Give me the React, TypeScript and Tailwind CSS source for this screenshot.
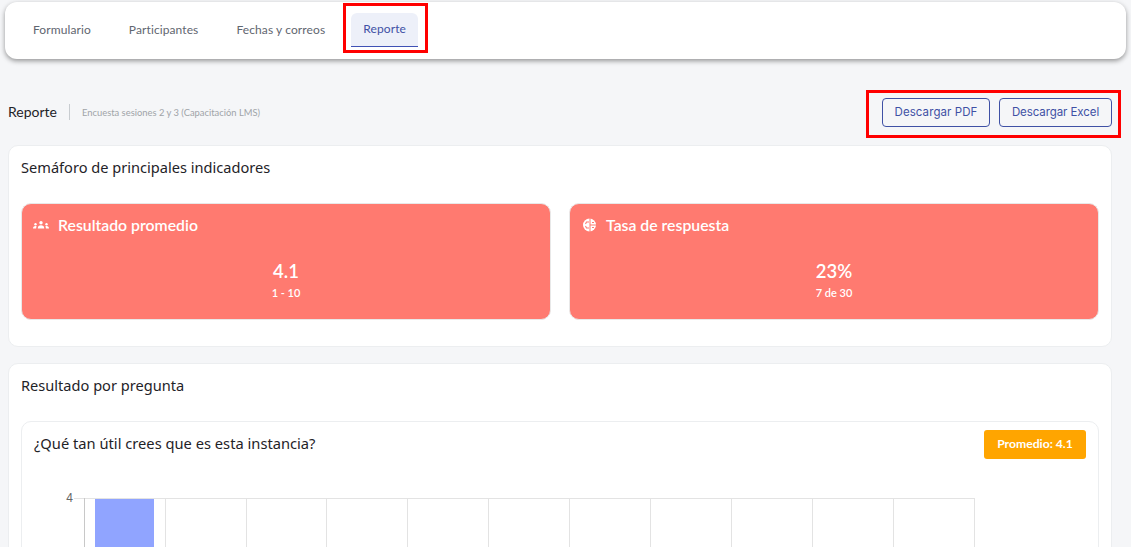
const tabs = ["Formulario", "Participantes", "Fechas y correos"];
const gridLines = [165, 246, 326, 407, 488, 569, 650, 731, 812, 893, 974];

function PeopleIcon() {
  return (
    <svg width="16" height="8" viewBox="0 0 16 8" fill="#fff" className="shrink-0">
      <circle cx="8" cy="1.700" r="1.700" />
      <path d="M4.800 7.500c0-2.200 1.200-3.300 3.200-3.300s3.200 1.100 3.200 3.300z" />
      <circle cx="2.500" cy="3.200" r="1.200" />
      <path d="M0 7.500c0-1.500.9-2.400 2.400-2.400.5 0 .9.100 1.200.3-.3.600-.5 1.300-.5 2.100z" />
      <circle cx="13.500" cy="3.200" r="1.200" />
      <path d="M16 7.500c0-1.500-.9-2.400-2.400-2.400-.5 0-.9.100-1.200.3.300.600.500 1.300.500 2.100z" />
    </svg>
  );
}

function PieIcon() {
  return (
    <svg width="13" height="14" viewBox="0 0 13 14" className="mr-[1px] ml-[2px] shrink-0">
      <circle cx="6.500" cy="7" r="6.500" fill="#fff" />
      <path d="M7 0v14M7 7H13" stroke="#ff7a70" strokeWidth="1" />
      <path d="M6 4H3.500L2.500 6M6 10H3.500L2.500 8M9 4.500H11M9 9.500H11" stroke="#ff7a70" strokeWidth="1.100" fill="none" />
    </svg>
  );
}

function StatCard({ icon, title, value, note }: { icon: React.ReactNode; title: string; value: string; note: string }) {
  return (
    <div className="h-[117px] flex-1 rounded-[10px] border border-[#e8e8e8] bg-[#ff7a70] text-white">
      <div className="flex h-[42px] items-center gap-[9px] pl-[11px]">
        {icon}
        <span className="text-[15.800px] font-semibold">{title}</span>
      </div>
      <div className="mt-[11px] text-center text-[18.500px] font-semibold leading-[28px]">{value}</div>
      <div className="mt-[1px] text-center text-[11px] font-semibold leading-[14px]">{note}</div>
    </div>
  );
}

export default function App() {
  return (
    <div className="h-[547px] overflow-hidden bg-[#f5f6f8] font-['Lato','Open_Sans',sans-serif] text-[#1f2328]">
      <div className="px-[5px] pt-[2px]">
        <div className="flex h-[57px] items-start rounded-[12px] bg-white pl-[9px] shadow-[0_2px_5px_rgba(0,0,0,0.4)]">
          {tabs.map((tab) => (
            <div key={tab} className="mt-[11px] flex h-[33px] items-center px-[19px] text-[12px] tracking-[0.1px] text-[#5f6670]">
              {tab}
            </div>
          ))}
          <div className="mt-[1px] -ml-[1px] border-[3px] border-[#ff0000] pt-[7px] pr-[7px] pb-[3px] pl-[5px]">
            <div className="flex h-[34px] w-[67px] items-center justify-center rounded-t-[6px] border-b border-[#3f51b5] bg-[#edf0f9] pb-[1px] text-[12px] tracking-[0.1px] text-[#3f51a5]">
              Reporte
            </div>
          </div>
        </div>
      </div>

      <div className="mt-[31px] flex h-[48px] items-start justify-between pr-[10px] pl-[8px]">
        <div className="flex h-[44px] items-center">
          <span className="mb-[2px] text-[14px] text-[#1f2328]">Reporte</span>
          <span className="mx-[12px] h-[16px] w-px bg-[#c8ccd0]" />
          <span className="mt-[2px] text-[9.400px] text-[#a0a4a8]">Encuesta sesiones 2 y 3 (Capacitación LMS)</span>
        </div>
        <div className="flex h-[48px] w-[255px] items-start gap-[9px] border-[3px] border-[#ff0000] pt-[5px] pl-[13px]">
          <button className="h-[29px] w-[108px] rounded-[4px] border border-[#3f51a5] font-['Inter',sans-serif] text-[11.500px] tracking-[0.08px] text-[#3f51a5]">
            Descargar PDF
          </button>
          <button className="h-[29px] w-[113px] rounded-[4px] border border-[#3f51a5] font-['Inter',sans-serif] text-[11.500px] tracking-[-0.08px] text-[#3f51a5]">
            Descargar Excel
          </button>
        </div>
      </div>

      <div className="mx-[8px] mt-[7px] h-[202px] w-[1104px] rounded-[10px] border border-[#eceef0] bg-white px-[12px]">
        <h2 className="pt-[12px] font-['Noto_Sans',sans-serif] text-[14.600px] leading-[19px] text-[#1f2328]">
          Semáforo de principales indicadores
        </h2>
        <div className="mt-[26px] flex gap-[18px]">
          <StatCard icon={<PeopleIcon />} title="Resultado promedio" value="4.1" note="1 - 10" />
          <StatCard icon={<PieIcon />} title="Tasa de respuesta" value="23%" note="7 de 30" />
        </div>
      </div>

      <div className="mx-[8px] mt-[16px] h-[300px] w-[1104px] rounded-[10px] border border-[#eceef0] bg-white px-[12px]">
        <h2 className="pt-[12px] font-['Noto_Sans',sans-serif] text-[14.600px] leading-[19px] text-[#1f2328]">
          Resultado por pregunta
        </h2>
        <div className="mt-[26px] h-[200px] rounded-[10px] border border-[#eceef0] bg-white">
          <div className="flex items-start justify-between pt-[8px] pr-[12px] pl-[12px]">
            <span className="pt-[3px] font-['Noto_Sans',sans-serif] text-[14.700px] leading-[20px] text-[#1f2328]">
              ¿Qué tan útil crees que es esta instancia?
            </span>
            <span className="flex h-[29px] w-[102px] items-center justify-center rounded-[3px] bg-[#ffa500] text-[12.200px] font-bold text-white">
              Promedio: 4.1
            </span>
          </div>
          <svg width="1000" height="80" className="mt-[10px] -ml-[22px]" viewBox="0 0 1000 80">
            <text x="73" y="33" fontSize="12" fill="#666" textAnchor="end" fontFamily="Liberation Sans">4</text>
            <line x1="74" y1="29.500" x2="975" y2="29.500" stroke="#e3e3e3" />
            <line x1="84.500" y1="29" x2="84.500" y2="80" stroke="#c8c8c8" />
            {gridLines.map((x) => (
              <line key={x} x1={x + 0.5} y1="29" x2={x + 0.5} y2="80" stroke="#e3e3e3" />
            ))}
            <rect x="95" y="30" width="59" height="50" fill="#90a4ff" />
          </svg>
        </div>
      </div>
    </div>
  );
}
